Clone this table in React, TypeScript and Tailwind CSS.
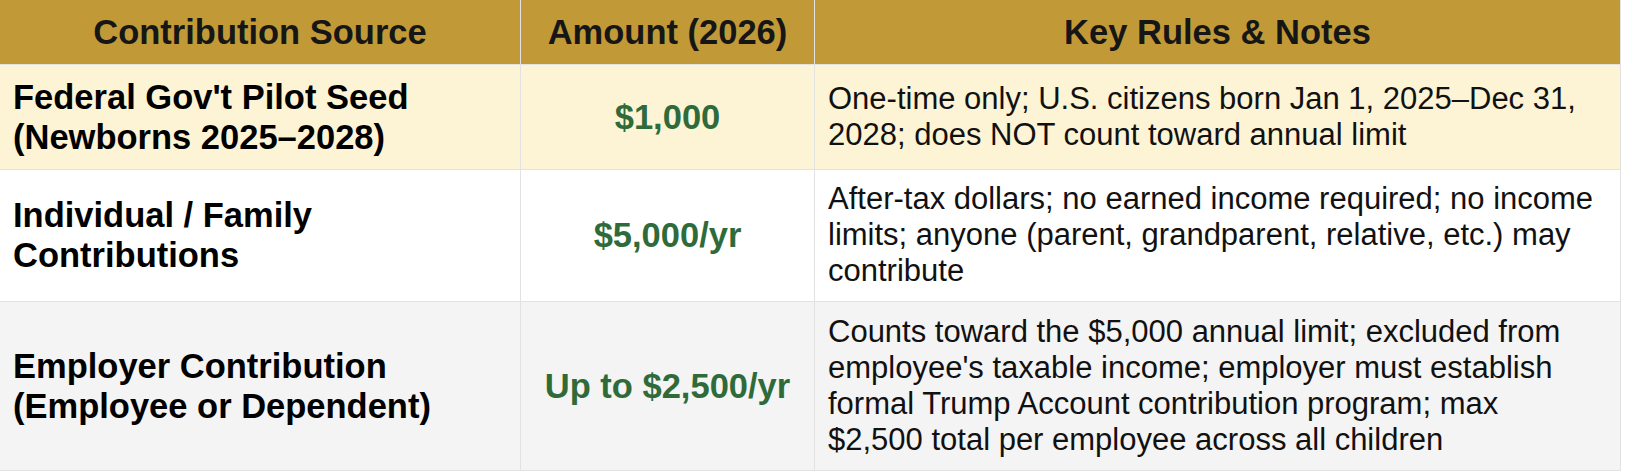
import type { ReactNode } from "react";

type Row = { source: string; amount: string; notes: ReactNode; bg: string };

const rows: Row[] = [
  {
    source: "Federal Gov't Pilot Seed (Newborns 2025–2028)",
    amount: "$1,000",
    notes: "One-time only; U.S. citizens born Jan 1, 2025–Dec 31, 2028; does NOT count toward annual limit",
    bg: "bg-[#fdf4d5]",
  },
  {
    source: "Individual / Family Contributions",
    amount: "$5,000/yr",
    notes: "After-tax dollars; no earned income required; no income limits; anyone (parent, grandparent, relative, etc.) may contribute",
    bg: "bg-white",
  },
  {
    source: "Employer Contribution (Employee or Dependent)",
    amount: "Up to $2,500/yr",
    notes: (
      <>
        Counts toward the $5,000 annual limit; excluded from employee's taxable income; employer must
        establish formal Trump Account contribution program; max
        <br />
        $2,500 total per employee across all children
      </>
    ),
    bg: "bg-[#f4f4f4]",
  },
];

export default function App() {
  const cell = "border-r border-b border-[#e2e2e2] px-[13px] py-[11.75px] flex items-center";

  return (
    <div className="w-[1630px] h-[476px] bg-white font-['Liberation_Sans',Arial,sans-serif]">
      <div className="grid grid-cols-[521px_294px_806px] w-[1621px]">
        {/* header */}
        {["Contribution Source", "Amount (2026)", "Key Rules & Notes"].map((h) => (
          <div
            key={h}
            className="h-[65px] bg-[#c19a37] border-r border-b border-[#e2e2e2] flex items-center justify-center text-[34.5px] font-bold leading-[40px] text-[#161616]"
          >
            {h}
          </div>
        ))}

        {rows.map((r) => (
          <div key={r.source} className="contents">
            <div className={`${cell} ${r.bg} text-[34.5px] font-bold leading-[40px] text-black`}>
              {r.source}
            </div>
            <div className={`${cell} ${r.bg} justify-center text-center text-[34.5px] font-bold leading-[40px] text-[#2f6b3a]`}>
              {r.amount}
            </div>
            <div className={`${cell} ${r.bg} text-[31px] leading-[36px] text-[#111]`}>
              <div>{r.notes}</div>
            </div>
          </div>
        ))}
      </div>
    </div>
  );
}
